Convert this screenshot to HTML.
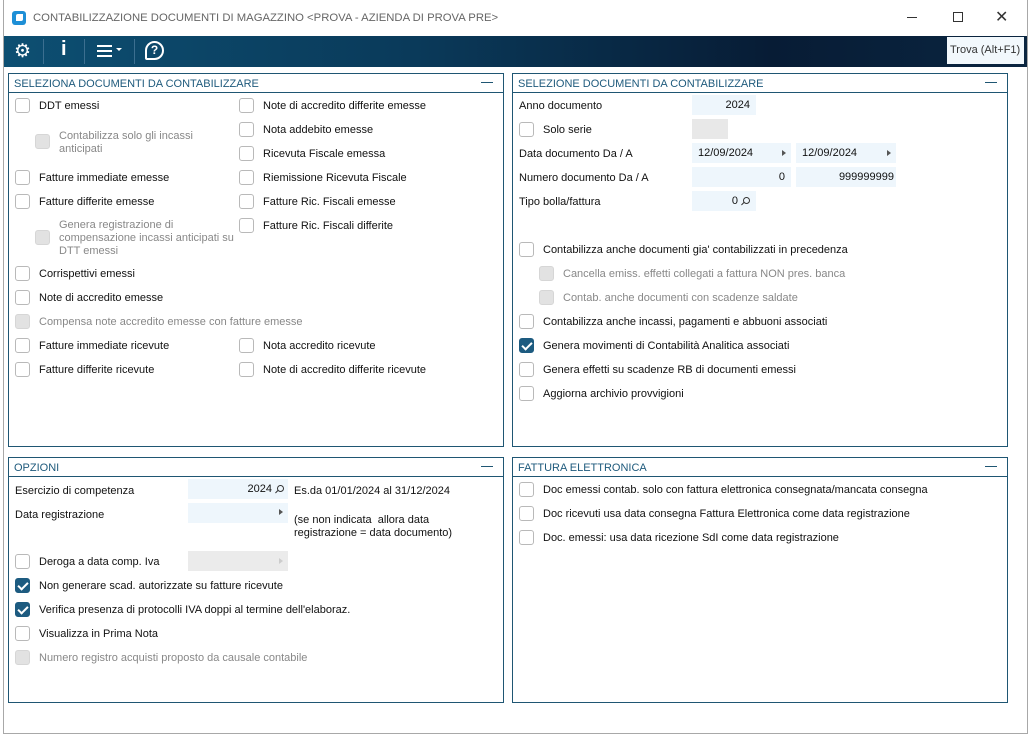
<!DOCTYPE html>
<html><head><meta charset="utf-8"><style>
*{box-sizing:border-box;margin:0;padding:0}
body{width:1031px;height:737px;background:#fff;position:relative;overflow:hidden;font-family:"Liberation Sans",Tahoma,sans-serif;font-size:11px;color:#111}
.a{position:absolute;white-space:nowrap}
.win{position:absolute;left:3px;top:0;width:1025px;height:734px;border:1px solid #a8a8a8;border-top:none}
.tb{position:absolute;left:4px;top:36px;width:1023px;height:31px;background:linear-gradient(90deg,#0d4f72 0%,#0a3a5a 40%,#071c35 75%,#0a2540 100%)}
.p{position:absolute;border:1px solid #1f5673;background:#fff}
.ph{position:absolute;left:0;top:0;right:0;height:19px;border-bottom:1px solid #1f5673;color:#1e5a7c;padding:4px 0 0 5px;font-size:11px}
.ph:after{content:"";position:absolute;right:10px;top:8px;width:12px;height:1px;background:#1f5673}
.cb{position:absolute;width:15px;height:15px;border:1px solid #b9b9b9;border-radius:3px;background:#fff}
.cb.d{background:#e2e2e2;border-color:#d6d6d6}
.cb.c{background:#1d5b80;border-color:#1d5b80}
.cb.c:after{content:"";position:absolute;left:4px;top:1px;width:4px;height:8px;border:solid #fff;border-width:0 2px 2px 0;transform:rotate(45deg)}
.t{position:absolute;white-space:nowrap;line-height:13px;margin-top:1px}
.g{color:#888}
.f{position:absolute;height:20px;background:#eef6fc;padding:4px 6px 0;text-align:right}
.ar{position:absolute;width:0;height:0;border-left:4px solid #555;border-top:3.5px solid transparent;border-bottom:3.5px solid transparent}
.lens{display:inline-block;width:7px;height:7px;border:1.3px solid #333;border-radius:50%;position:relative;margin-left:5px}
.lens:after{content:"";position:absolute;left:-3px;top:5px;width:4px;height:1.4px;background:#333;transform:rotate(-45deg)}
</style></head><body>
<div class="win"></div>
<div class="a" style="left:12px;top:11px;width:14px;height:14px;background:#1e8fd6;border-radius:3px"></div>
<div class="a" style="left:16px;top:14px;width:7px;height:7px;background:#fff;border-radius:2px 0 2px 0"></div>
<div class="a" style="left:33px;top:12px;color:#666;font-size:11.3px">CONTABILIZZAZIONE DOCUMENTI DI MAGAZZINO &lt;PROVA - AZIENDA DI PROVA PRE&gt;</div>
<div class="a" style="left:907px;top:17px;width:10px;height:1px;background:#333"></div>
<div class="a" style="left:953px;top:12px;width:10px;height:10px;border:1px solid #333"></div>
<div class="a" style="left:995px;top:7px;font-size:16px;color:#333">✕</div>
<div class="tb"></div>
<div class="a" style="left:14px;top:40px;color:#fff;font-size:19px">⚙</div>
<div class="a" style="left:43px;top:39px;width:1px;height:25px;background:#3c6f90"></div>
<div class="a" style="left:61px;top:38px;color:#fff;font-size:20px;font-weight:bold">i</div>
<div class="a" style="left:84px;top:39px;width:1px;height:25px;background:#3c6f90"></div>
<div class="a" style="left:97px;top:45px;width:15px;height:2px;background:#fff"></div>
<div class="a" style="left:97px;top:50px;width:15px;height:2px;background:#fff"></div>
<div class="a" style="left:97px;top:55px;width:15px;height:2px;background:#fff"></div>
<div class="a" style="left:116px;top:48px;border-top:3px solid #fff;border-left:3px solid transparent;border-right:3px solid transparent"></div>
<div class="a" style="left:134px;top:39px;width:1px;height:25px;background:#3c6f90"></div>
<div class="a" style="left:145px;top:41px;width:19px;height:19px;border:2px solid #fff;border-radius:50% 50% 50% 2px;color:#fff;font-size:12px;text-align:center;line-height:15px;font-weight:bold">?</div>
<div class="a" style="left:947px;top:37px;width:77px;height:27px;background:#f2f8fc;color:#333;padding:7px 0 0 3px;font-size:11px">Trova (Alt+F1)</div>

<div class="p" style="left:8px;top:73px;width:496px;height:374px"><div class="ph">SELEZIONA DOCUMENTI DA CONTABILIZZARE</div></div>
<div class="p" style="left:512px;top:73px;width:496px;height:374px"><div class="ph">SELEZIONE DOCUMENTI DA CONTABILIZZARE</div></div>
<div class="p" style="left:8px;top:457px;width:496px;height:246px"><div class="ph">OPZIONI</div></div>
<div class="p" style="left:512px;top:457px;width:496px;height:246px"><div class="ph">FATTURA ELETTRONICA</div></div>

<div class="cb" style="left:15px;top:98px"></div><div class="t" style="left:39px;top:99px">DDT emessi</div>
<div class="cb d" style="left:35px;top:134px"></div><div class="t g" style="left:59px;top:129px">Contabilizza solo gli incassi<br>anticipati</div>
<div class="cb" style="left:15px;top:170px"></div><div class="t" style="left:39px;top:171px">Fatture immediate emesse</div>
<div class="cb" style="left:15px;top:194px"></div><div class="t" style="left:39px;top:195px">Fatture differite emesse</div>
<div class="cb d" style="left:35px;top:230px"></div><div class="t g" style="left:59px;top:218px">Genera registrazione di<br>compensazione incassi anticipati su<br>DTT emessi</div>
<div class="cb" style="left:15px;top:266px"></div><div class="t" style="left:39px;top:267px">Corrispettivi emessi</div>
<div class="cb" style="left:15px;top:290px"></div><div class="t" style="left:39px;top:291px">Note di accredito emesse</div>
<div class="cb d" style="left:15px;top:314px"></div><div class="t g" style="left:39px;top:315px">Compensa note accredito emesse con fatture emesse</div>
<div class="cb" style="left:15px;top:338px"></div><div class="t" style="left:39px;top:339px">Fatture immediate ricevute</div>
<div class="cb" style="left:15px;top:362px"></div><div class="t" style="left:39px;top:363px">Fatture differite ricevute</div>
<div class="cb" style="left:239px;top:98px"></div><div class="t" style="left:263px;top:99px">Note di accredito differite emesse</div>
<div class="cb" style="left:239px;top:122px"></div><div class="t" style="left:263px;top:123px">Nota addebito emesse</div>
<div class="cb" style="left:239px;top:146px"></div><div class="t" style="left:263px;top:147px">Ricevuta Fiscale emessa</div>
<div class="cb" style="left:239px;top:170px"></div><div class="t" style="left:263px;top:171px">Riemissione Ricevuta Fiscale</div>
<div class="cb" style="left:239px;top:194px"></div><div class="t" style="left:263px;top:195px">Fatture Ric. Fiscali emesse</div>
<div class="cb" style="left:239px;top:218px"></div><div class="t" style="left:263px;top:219px">Fatture Ric. Fiscali differite</div>
<div class="cb" style="left:239px;top:338px"></div><div class="t" style="left:263px;top:339px">Nota accredito ricevute</div>
<div class="cb" style="left:239px;top:362px"></div><div class="t" style="left:263px;top:363px">Note di accredito differite ricevute</div>

<div class="t" style="left:519px;top:99px">Anno documento</div>
<div class="f" style="left:692px;top:95px;width:64px">2024</div>
<div class="cb" style="left:519px;top:122px"></div><div class="t" style="left:543px;top:123px">Solo serie</div>
<div class="a" style="left:692px;top:119px;width:36px;height:20px;background:#e8e8e8"></div>
<div class="t" style="left:519px;top:147px">Data documento Da / A</div>
<div class="f" style="left:692px;top:143px;width:99px;text-align:left">12/09/2024</div><div class="ar" style="left:782px;top:150px"></div>
<div class="f" style="left:796px;top:143px;width:100px;text-align:left">12/09/2024</div><div class="ar" style="left:887px;top:150px"></div>
<div class="t" style="left:519px;top:171px">Numero documento Da / A</div>
<div class="f" style="left:692px;top:167px;width:99px">0</div>
<div class="f" style="left:796px;top:167px;width:100px;padding-right:2px">999999999</div>
<div class="t" style="left:519px;top:195px">Tipo bolla/fattura</div>
<div class="f" style="left:692px;top:191px;width:64px;padding-right:6px">0<span class="lens"></span></div>
<div class="cb" style="left:519px;top:242px"></div><div class="t" style="left:543px;top:243px">Contabilizza anche documenti gia' contabilizzati in precedenza</div>
<div class="cb d" style="left:539px;top:266px"></div><div class="t g" style="left:563px;top:267px">Cancella emiss. effetti collegati a fattura NON pres. banca</div>
<div class="cb d" style="left:539px;top:290px"></div><div class="t g" style="left:563px;top:291px">Contab. anche documenti con scadenze saldate</div>
<div class="cb" style="left:519px;top:314px"></div><div class="t" style="left:543px;top:315px">Contabilizza anche incassi, pagamenti e abbuoni associati</div>
<div class="cb c" style="left:519px;top:338px"></div><div class="t" style="left:543px;top:339px">Genera movimenti di Contabilità Analitica associati</div>
<div class="cb" style="left:519px;top:362px"></div><div class="t" style="left:543px;top:363px">Genera effetti su scadenze RB di documenti emessi</div>
<div class="cb" style="left:519px;top:386px"></div><div class="t" style="left:543px;top:387px">Aggiorna archivio provvigioni</div>

<div class="t" style="left:15px;top:484px">Esercizio di competenza</div>
<div class="f" style="left:188px;top:479px;width:100px;padding-right:4px">2024<span class="lens"></span></div>
<div class="t" style="left:294px;top:484px">Es.da 01/01/2024 al 31/12/2024</div>
<div class="t" style="left:15px;top:508px">Data registrazione</div>
<div class="f" style="left:188px;top:503px;width:100px"></div><div class="ar" style="left:279px;top:509px"></div>
<div class="t" style="left:294px;top:513px">(se non indicata&nbsp; allora data<br>registrazione = data documento)</div>
<div class="cb" style="left:15px;top:554px"></div><div class="t" style="left:39px;top:555px">Deroga a data comp. Iva</div>
<div class="a" style="left:188px;top:551px;width:100px;height:20px;background:#ebebeb"></div><div class="ar" style="left:279px;top:558px;border-left-color:#ccc"></div>
<div class="cb c" style="left:15px;top:578px"></div><div class="t" style="left:39px;top:579px">Non generare scad. autorizzate su fatture ricevute</div>
<div class="cb c" style="left:15px;top:602px"></div><div class="t" style="left:39px;top:603px">Verifica presenza di protocolli IVA doppi al termine dell'elaboraz.</div>
<div class="cb" style="left:15px;top:626px"></div><div class="t" style="left:39px;top:627px">Visualizza in Prima Nota</div>
<div class="cb d" style="left:15px;top:650px"></div><div class="t g" style="left:39px;top:651px">Numero registro acquisti proposto da causale contabile</div>

<div class="cb" style="left:519px;top:482px"></div><div class="t" style="left:543px;top:483px">Doc emessi contab. solo con fattura elettronica consegnata/mancata consegna</div>
<div class="cb" style="left:519px;top:506px"></div><div class="t" style="left:543px;top:507px">Doc ricevuti usa data consegna Fattura Elettronica come data registrazione</div>
<div class="cb" style="left:519px;top:530px"></div><div class="t" style="left:543px;top:531px">Doc. emessi: usa data ricezione SdI come data registrazione</div>
</body></html>
